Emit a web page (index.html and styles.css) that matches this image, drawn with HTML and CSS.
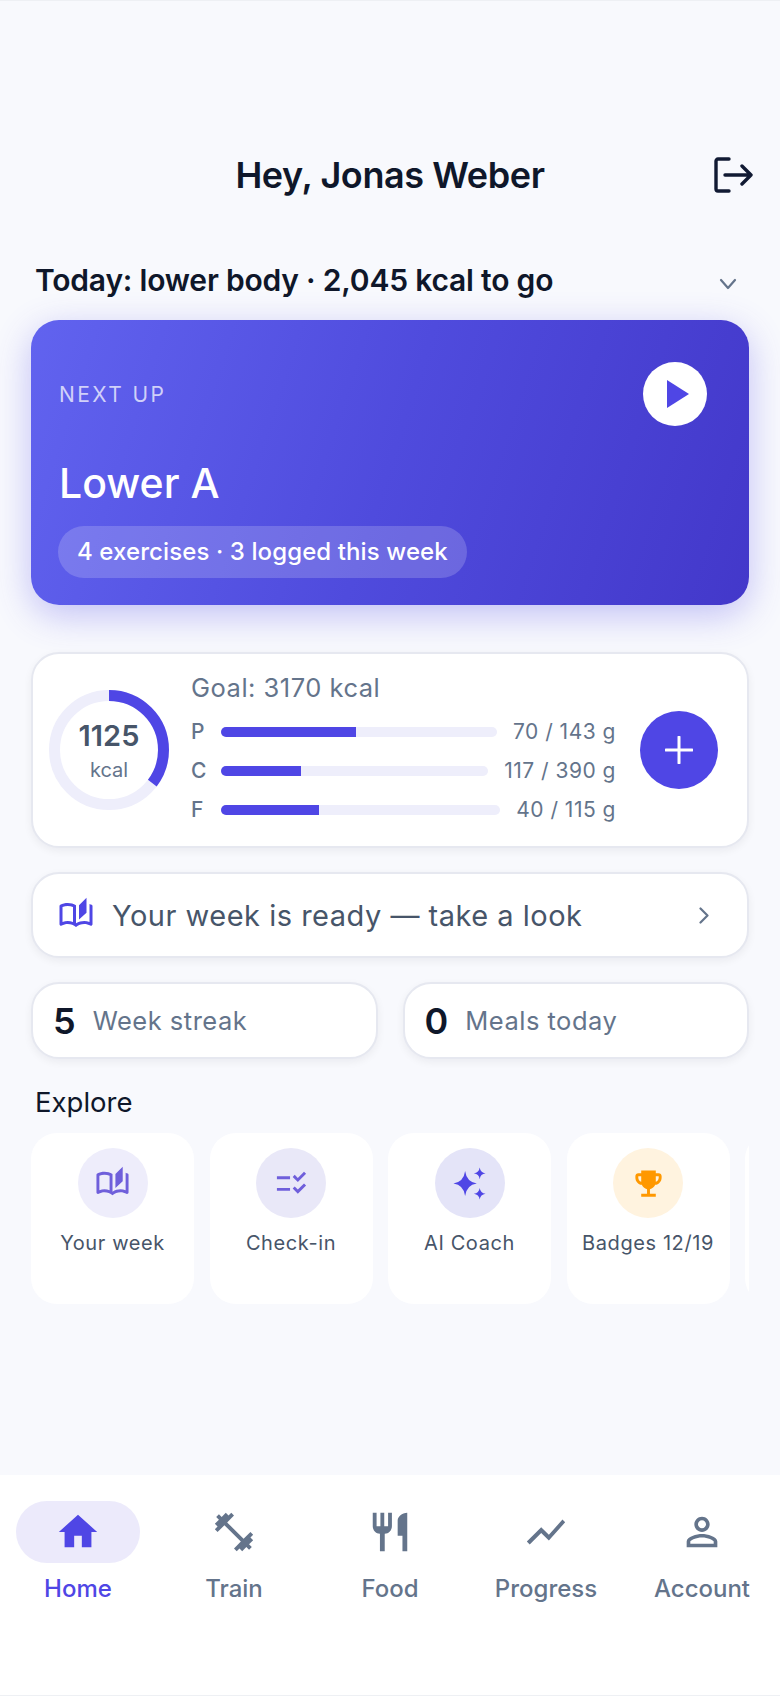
FILE: index.html
```html
<!DOCTYPE html>
<html lang="en">
<head>
    <meta charset="UTF-8">
    <meta name="viewport" content="width=device-width, initial-scale=1.0">
    <title>Home</title>
    <link rel="stylesheet" href="styles.css">
</head>
<body>
    <div class="app">
        <main class="content">
            <header class="top-bar">
                <span></span>
                <h1 class="greeting">Hey, Jonas Weber</h1>
                <svg class="logout" viewBox="0 0 39 36" fill="none" stroke="currentColor" stroke-width="3.4" stroke-linecap="round" stroke-linejoin="round">
                    <path d="M15 2H4a2 2 0 0 0-2 2v28a2 2 0 0 0 2 2h11"/>
                    <path d="M11 18h26M28 9l9 9-9 9"/>
                </svg>
            </header>

            <div class="today">
                <h2 class="today-text">Today: lower body · 2,045 kcal to go</h2>
                <svg class="today-chevron" viewBox="0 0 18 12" fill="none" stroke="currentColor" stroke-width="2.2" stroke-linecap="round" stroke-linejoin="round"><path d="M2 2l7 8 7-8"/></svg>
            </div>

            <section class="hero">
                <div class="hero-top">
                    <span class="hero-label">NEXT UP</span>
                    <span class="play"><svg viewBox="0 0 22 28" width="22" height="28"><path d="M0 0l22 14L0 28z" fill="#4f46e5"/></svg></span>
                </div>
                <div class="hero-title">Lower A</div>
                <div class="hero-pill">4 exercises · 3 logged this week</div>
            </section>

            <section class="card macros">
                <div class="ring">
                    <svg viewBox="0 0 120 120" width="120" height="120">
                        <circle cx="60" cy="60" r="54.5" fill="none" stroke="#eeeefb" stroke-width="11"/>
                        <circle cx="60" cy="60" r="54.5" fill="none" stroke="#4f46e5" stroke-width="11" stroke-dasharray="121 343" transform="rotate(-90 60 60)"/>
                    </svg>
                    <div class="ring-text">
                        <span class="ring-num">1125</span>
                        <span class="ring-unit">kcal</span>
                    </div>
                </div>
                <div class="macro-col">
                    <div class="goal">Goal: 3170 kcal</div>
                    <div class="macro-row">
                        <span class="macro-name">P</span>
                        <span class="bar"><span class="bar-fill" style="width: 49%"></span></span>
                        <span class="macro-val">70 / 143 g</span>
                    </div>
                    <div class="macro-row">
                        <span class="macro-name">C</span>
                        <span class="bar"><span class="bar-fill" style="width: 30%"></span></span>
                        <span class="macro-val">117 / 390 g</span>
                    </div>
                    <div class="macro-row">
                        <span class="macro-name">F</span>
                        <span class="bar"><span class="bar-fill" style="width: 35%"></span></span>
                        <span class="macro-val">40 / 115 g</span>
                    </div>
                </div>
                <span class="add">
                    <svg viewBox="0 0 28 28" width="28" height="28" fill="none" stroke="#fff" stroke-width="3" stroke-linecap="round"><path d="M14 1v26M1 14h26"/></svg>
                </span>
            </section>

            <section class="card week">
                <svg class="week-icon" viewBox="0 0 24 24" fill="#4f46e5"><path d="M22.47 5.2C22 4.96 21.51 4.76 21 4.59v12.03C19.86 16.21 18.69 16 17.5 16c-1.9 0-3.78.54-5.5 1.58V5.48C10.38 4.55 8.51 4 6.5 4 4.71 4 3.02 4.44 1.53 5.2c-.33.16-.53.51-.53.88v12.08c0 .76.81 1.23 1.48.87C3.69 18.4 5.05 18 6.5 18c2.07 0 3.98.82 5.5 2 1.52-1.18 3.43-2 5.5-2 1.45 0 2.81.4 4.02 1.04.67.36 1.48-.11 1.48-.87V6.08c0-.37-.2-.72-.53-.88zM10 16.62C8.86 16.21 7.69 16 6.5 16c-1.19 0-2.36.21-3.5.62V6.71C4.11 6.24 5.28 6 6.5 6c1.2 0 2.39.25 3.5.71v9.91zM19 .5l-5 5V15l5-4.5V.5z"/></svg>
                <span class="week-text">Your week is ready — take a look</span>
                <svg class="week-chevron" viewBox="0 0 10 17" fill="none" stroke="currentColor" stroke-width="2.2" stroke-linecap="round" stroke-linejoin="round"><path d="M1.500 1.500l7 7-7 7"/></svg>
            </section>

            <section class="stats">
                <div class="card stat"><span class="stat-num">5</span><span class="stat-label">Week streak</span></div>
                <div class="card stat"><span class="stat-num">0</span><span class="stat-label">Meals today</span></div>
            </section>

            <h3 class="explore-title">Explore</h3>
            <section class="explore">
                <div class="tile">
                    <span class="tile-icon tint-book"><svg viewBox="0 0 24 24" fill="#6f5fdb"><path d="M22.47 5.2C22 4.96 21.51 4.76 21 4.59v12.03C19.86 16.21 18.69 16 17.5 16c-1.9 0-3.78.54-5.5 1.58V5.48C10.38 4.55 8.51 4 6.5 4 4.71 4 3.02 4.44 1.53 5.2c-.33.16-.53.51-.53.88v12.08c0 .76.81 1.23 1.48.87C3.69 18.4 5.05 18 6.5 18c2.07 0 3.98.82 5.5 2 1.52-1.18 3.43-2 5.5-2 1.45 0 2.81.4 4.02 1.04.67.36 1.48-.11 1.48-.87V6.08c0-.37-.2-.72-.53-.88zM10 16.62C8.86 16.21 7.69 16 6.5 16c-1.19 0-2.36.21-3.5.62V6.71C4.11 6.24 5.28 6 6.5 6c1.2 0 2.39.25 3.5.71v9.91zM19 .5l-5 5V15l5-4.5V.5z"/></svg></span>
                    <span class="tile-label">Your week</span>
                </div>
                <div class="tile">
                    <span class="tile-icon tint-check"><svg viewBox="0 0 24 24" fill="#6f5fdb"><path d="M11 7H2v2h9V7zm0 8H2v2h9v-2zm5.34-4L12.8 7.46l1.41-1.41 2.12 2.12 4.24-4.24L22 5.34 16.34 11zm0 8L12.8 15.46l1.41-1.41 2.12 2.12 4.24-4.24L22 13.34 16.34 19z"/></svg></span>
                    <span class="tile-label">Check-in</span>
                </div>
                <div class="tile">
                    <span class="tile-icon tint-coach"><svg viewBox="0 0 24 24" fill="#4f46e5"><path d="M9 3.5Q10 11 17 12 10 13 9 20.500 8 13 1 12 8 11 9 3.500zM19 1Q19.500 4.500 23 5 19.500 5.500 19 9 18.500 5.500 15 5 18.500 4.500 19 1zM19 15Q19.500 18.500 23 19 19.500 19.500 19 23 18.500 19.500 15 19 18.500 18.500 19 15z"/></svg></span>
                    <span class="tile-label">AI Coach</span>
                </div>
                <div class="tile">
                    <span class="tile-icon tint-badge"><svg viewBox="0 0 24 24" fill="#ff9800"><path d="M19 5h-2V3H7v2H5c-1.100 0-2 .9-2 2v1c0 2.550 1.920 4.630 4.390 4.940.63 1.500 1.980 2.630 3.610 2.960V19H7v2h10v-2h-4v-3.100c1.630-.33 2.980-1.460 3.610-2.960C19.080 12.630 21 10.550 21 8V7c0-1.100-.9-2-2-2zM5 8V7h2v3.820C5.840 10.400 5 9.300 5 8zm14 0c0 1.300-.84 2.400-2 2.820V7h2v1z"/></svg></span>
                    <span class="tile-label">Badges 12/19</span>
                </div>
                <div class="tile"></div>
            </section>
        </main>

        <nav class="tabs">
            <div class="tab active">
                <span class="tab-icon"><svg viewBox="0 0 24 24" fill="currentColor"><path d="M10 20v-6h4v6h5v-8h3L12 3 2 12h3v8z"/></svg></span>
                <span class="tab-label">Home</span>
            </div>
            <div class="tab">
                <span class="tab-icon"><svg viewBox="0 0 24 24" fill="currentColor"><path d="M20.57 14.860L22 13.430 20.570 12 17 15.570 8.430 7 12 3.430 10.570 2 9.140 3.430 7.710 2 5.570 4.140 4.140 2.710 2.710 4.140l1.430 1.430L2 7.710l1.430 1.430L2 10.570 3.430 12 7 8.430 15.570 17 12 20.570 13.430 22l1.430-1.430L16.290 22l2.140-2.140 1.430 1.430 1.430-1.430-1.430-1.430L22 16.290z"/></svg></span>
                <span class="tab-label">Train</span>
            </div>
            <div class="tab">
                <span class="tab-icon"><svg viewBox="0 0 24 24" fill="currentColor"><path d="M11 9H9V2H7v7H5V2H3v7c0 2.120 1.660 3.840 3.750 3.970V22h2.500v-9.030C11.340 12.840 13 11.120 13 9V2h-2v7zm5-3v8h2.500v8H21V2c-2.760 0-5 2.240-5 4z"/></svg></span>
                <span class="tab-label">Food</span>
            </div>
            <div class="tab">
                <span class="tab-icon"><svg viewBox="0 0 24 24" fill="currentColor"><path d="M3.500 18.490l6-6.010 4 4L22 6.920l-1.410-1.410-7.090 7.970-4-4L2 16.990z"/></svg></span>
                <span class="tab-label">Progress</span>
            </div>
            <div class="tab">
                <span class="tab-icon"><svg viewBox="0 0 24 24" fill="currentColor"><path d="M12 5.900c1.160 0 2.100.94 2.100 2.100s-.94 2.100-2.100 2.100S9.900 9.160 9.900 8s.94-2.100 2.100-2.100m0 9c2.970 0 6.100 1.460 6.100 2.100v1.100H5.900V17c0-.64 3.130-2.100 6.100-2.100M12 4C9.790 4 8 5.790 8 8s1.790 4 4 4 4-1.790 4-4-1.790-4-4-4zm0 9c-2.670 0-8 1.340-8 4v3h16v-3c0-2.660-5.330-4-8-4z"/></svg></span>
                <span class="tab-label">Account</span>
            </div>
        </nav>
    </div>
</body>
</html>
```

FILE: styles.css
```css
* {
    box-sizing: border-box;
}
body {
    margin: 0;
    background-color: #f8f9fd;
    font-family: Inter, "Noto Sans", sans-serif;
    color: #0f172a;
}
h1, h2, h3 {
    margin: 0;
}
.app {
    display: flex;
    flex-direction: column;
    width: 780px;
    height: 1696px;
    border-top: 1px solid #eef0f4;
    overflow: hidden;
}
.content {
    flex: 1;
    padding: 0 31px;
    min-height: 0;
}

/* header */
.top-bar {
    display: grid;
    grid-template-columns: 1fr auto 1fr;
    align-items: center;
    height: 50px;
    margin: 149px -4px 0;
}
.greeting {
    font-size: 36px;
    font-weight: 600;
    letter-spacing: -0.4px;
}
.logout {
    justify-self: end;
    width: 39px;
    height: 36px;
    color: #111a33;
}
.today {
    display: flex;
    justify-content: space-between;
    align-items: center;
    height: 40px;
    margin-top: 60px;
    padding: 0 12px 0 4px;
}
.today-text {
    font-size: 30px;
    font-weight: 600;
    letter-spacing: -0.2px;
}
.today-chevron {
    width: 18px;
    height: 12px;
    margin-top: 8px;
    color: #64748b;
}

/* hero card */
.hero {
    height: 285px;
    margin-top: 20px;
    padding: 42px 42px 0 27px;
    border-radius: 28px;
    background: linear-gradient(108deg, #6163ef 0%, #4f4bdd 50%, #4338ca 100%);
    box-shadow: 0 10px 36px rgba(79, 70, 229, 0.32);
    color: #fff;
}
.hero-top {
    display: flex;
    justify-content: space-between;
    align-items: center;
}
.hero-label {
    font-size: 21px;
    letter-spacing: 2.4px;
    color: rgba(255, 255, 255, 0.72);
    margin-left: 1px;
}
.play {
    display: flex;
    align-items: center;
    justify-content: center;
    width: 64px;
    height: 64px;
    padding-left: 5px;
    border-radius: 50%;
    background-color: #fff;
}
.hero-title {
    margin: 32px 0 0 1px;
    font-size: 41px;
    line-height: 50px;
    font-weight: 500;
}
.hero-pill {
    display: inline-block;
    height: 52px;
    margin-top: 18px;
    padding: 0 19px;
    border-radius: 26px;
    background-color: rgba(255, 255, 255, 0.18);
    font-size: 24px;
    line-height: 52px;
    letter-spacing: 0.1px;
    font-weight: 500;
}

/* white cards */
.card {
    border: 2px solid #e6e8f0;
    border-radius: 28px;
    background-color: #fff;
    box-shadow: 0 3px 8px rgba(15, 23, 42, 0.06);
}
.macros {
    display: flex;
    align-items: center;
    height: 196px;
    margin-top: 47px;
    padding: 0 29px 0 16px;
}
.ring {
    position: relative;
    flex: none;
    width: 120px;
    height: 120px;
}
.ring svg {
    display: block;
}
.ring-text {
    position: absolute;
    inset: 0;
    display: flex;
    flex-direction: column;
    align-items: center;
    justify-content: center;
    padding-top: 2px;
}
.ring-num {
    font-size: 29px;
    line-height: 38px;
    font-weight: 600;
    color: #475569;
}
.ring-unit {
    font-size: 20px;
    line-height: 30px;
    color: #64748b;
}
.macro-col {
    flex: 1;
    margin: 0 24px 0 22px;
}
.goal {
    margin: 2px 0 9px;
    font-size: 25.500px;
    line-height: 30px;
    letter-spacing: 0.5px;
    color: #64748b;
}
.macro-row {
    display: flex;
    align-items: center;
    height: 39px;
}
.macro-name {
    flex: none;
    width: 30px;
    font-size: 21px;
    font-weight: 500;
    color: #64748b;
}
.bar {
    flex: 1;
    height: 10px;
    border-radius: 5px;
    background-color: #eeeefb;
    overflow: hidden;
}
.bar-fill {
    display: block;
    height: 100%;
    background-color: #4f46e5;
}
.macro-val {
    margin-left: 16px;
    font-size: 21px;
    letter-spacing: 0.5px;
    color: #64748b;
}
.add {
    display: flex;
    flex: none;
    align-items: center;
    justify-content: center;
    width: 78px;
    height: 78px;
    border-radius: 50%;
    background-color: #4f46e5;
}
.week {
    display: flex;
    align-items: center;
    height: 86px;
    margin-top: 24px;
    padding: 0 38px 0 25px;
}
.week-icon {
    width: 36px;
    height: 36px;
}
.week-text {
    flex: 1;
    margin-left: 18px;
    font-size: 29px;
    letter-spacing: 0.5px;
    color: #475569;
}
.week-chevron {
    width: 10px;
    height: 17px;
    color: #64748b;
}
.stats {
    display: flex;
    gap: 25px;
    margin-top: 24px;
}
.stat {
    display: flex;
    flex: 1;
    align-items: center;
    height: 77px;
    padding: 0 20px;
}
.stat-num {
    font-size: 36px;
    font-weight: 600;
}
.stat-label {
    margin-left: 17px;
    font-size: 25.500px;
    letter-spacing: 0.5px;
    color: #64748b;
}

/* explore */
.explore-title {
    margin: 25px 0 0 4px;
    font-size: 27.500px;
    line-height: 36px;
    font-weight: 400;
}
.explore {
    display: flex;
    gap: 15.500px;
    margin-top: 13px;
    overflow: hidden;
}
.tile {
    display: flex;
    flex: none;
    flex-direction: column;
    align-items: center;
    width: 163px;
    height: 171px;
    padding-top: 15px;
    border-radius: 26px;
    background-color: #fff;
}
.tile-icon {
    display: flex;
    align-items: center;
    justify-content: center;
    width: 70px;
    height: 70px;
    border-radius: 50%;
}
.tile-icon svg {
    width: 35px;
    height: 35px;
}
.tint-book { background-color: #eeedfb; }
.tint-check { background-color: #e9e8f8; }
.tint-coach { background-color: #e4e4f8; }
.tint-badge { background-color: #fff3df; }
.tile-label {
    margin-top: 11px;
    font-size: 20px;
    line-height: 28px;
    letter-spacing: 0.6px;
    color: #475569;
}

/* bottom nav */
.tabs {
    display: flex;
    flex: none;
    height: 221px;
    padding: 26px 0 0;
    background-color: #fff;
    border-bottom: 1px solid #eef0f4;
}
.tab {
    display: flex;
    flex: 1;
    flex-direction: column;
    align-items: center;
    color: #64748b;
}
.tab-icon {
    display: flex;
    align-items: center;
    justify-content: center;
    width: 124px;
    height: 62px;
    border-radius: 31px;
}
.tab-icon svg {
    width: 46px;
    height: 46px;
}
.tab-label {
    margin-top: 10px;
    font-size: 24px;
    line-height: 32px;
    font-weight: 500;
}
.tab.active {
    color: #4f46e5;
}
.tab.active .tab-icon {
    background-color: #eceafb;
}
```
